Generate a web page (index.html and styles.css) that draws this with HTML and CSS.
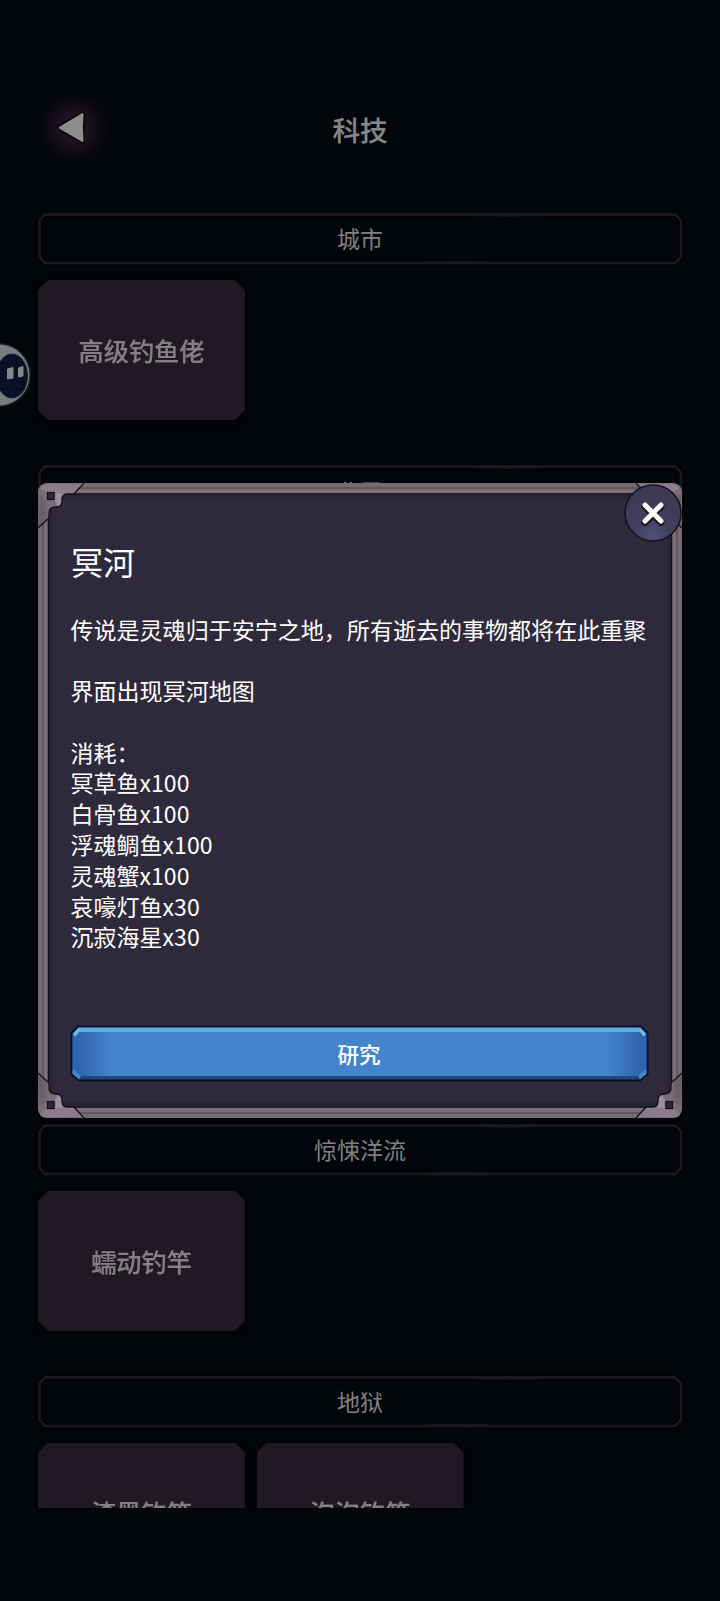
FILE: index.html
```html
<!DOCTYPE html>
<html lang="zh-CN">
<head>
<meta charset="utf-8">
<title>科技</title>
<link rel="stylesheet" href="styles.css">
</head>
<body>
<svg width="0" height="0" class="defs">
  <defs>
    <linearGradient id="cornerFill" x1="0" y1="1" x2="1" y2="0">
      <stop offset="0" stop-color="#6c5f69"/><stop offset="0.55" stop-color="#7f727d"/><stop offset="1" stop-color="#776a74"/>
    </linearGradient>
    <symbol id="headerBox" viewBox="0 0 644 52" overflow="visible">
      <path d="M7 1.500H637L643 7.500V44L637 50H7L1.500 44V7.500Z" fill="#02050a" stroke="#000003" stroke-width="5.500"/>
      <path d="M7 1.500H637L643 7.500V44L637 50H7L1.500 44V7.500Z" fill="none" stroke="#1b171c" stroke-width="2.800"/>
      <path d="M430 2.500Q470 4 510 2.500M390 49Q420 47.500 450 49" fill="none" stroke="#1b171c" stroke-width="1"/>
    </symbol>
    <g id="corner">
      <path d="M0 45V10Q0 0 10 0H46L36 11H28Q24 12 24 18Q24 24 18 24Q11 24 11 30V35Z" fill="url(#cornerFill)"/>
      <path d="M3 5L10 10H17L19 17L23 11L34 11L44 1H10Q5 1 3 5Z" fill="#94869a" opacity=".6"/>
      <path d="M17 17L20 24L23 21V13L26 11L18 10Z" fill="#a49aa8" opacity=".7"/>
      <path d="M1 10L8 17V36L1 43Z" fill="#62545e" opacity=".4"/>
      <path d="M46 0L36 11H29Q24 11 24 18Q24 24 18 24Q11 24 11 30V35L0 45" fill="none" stroke="#171018" stroke-width="1.300"/>
      <rect x="9.500" y="9.500" width="6.500" height="7" fill="#30283a" stroke="#150f18" stroke-width="1.300"/>
    </g>
  </defs>
</svg>
<main class="screen">
  <header class="topbar">
    <svg class="back" viewBox="0 0 100 80">
      <path d="M32 36Q30 37.700 32 39.500L54.500 52.500Q57.500 53.500 57.300 50Q56 37 57.300 25Q57.500 21.500 54.500 22.500Z" fill="#8d8d8d" stroke="#08050a" stroke-width="1.600"/>
    </svg>
    <h1 class="title">科技</h1>
  </header>
  <div class="list">
    <section class="section">
      <h2 class="head"><svg class="head-bg"><use href="#headerBox" width="644" height="52"/></svg><span>城市</span></h2>
      <div class="cards"><div class="card-wrap"><div class="card">高级钓鱼佬</div></div></div>
    </section>
    <section class="section tall">
      <h2 class="head"><svg class="head-bg"><use href="#headerBox" width="644" height="52"/></svg><span>北灵</span></h2>
    </section>
    <section class="section">
      <h2 class="head"><svg class="head-bg"><use href="#headerBox" width="644" height="52"/></svg><span>惊悚洋流</span></h2>
      <div class="cards"><div class="card-wrap"><div class="card">蠕动钓竿</div></div></div>
    </section>
    <section class="section">
      <h2 class="head"><svg class="head-bg"><use href="#headerBox" width="644" height="52"/></svg><span>地狱</span></h2>
      <div class="cards"><div class="card-wrap"><div class="card">漆黑钓竿</div></div><div class="card-wrap"><div class="card">泡泡钓竿</div></div></div>
    </section>
  </div>

  <svg class="assistant" viewBox="0 0 34 66">
    <circle cx="-1" cy="33" r="31.200" fill="#777d7f" stroke="#14232f" stroke-width="1.500"/>
    <ellipse cx="12" cy="34" rx="15.500" ry="22" fill="#091125" stroke="#1a2433"/>
    <path d="M7.500 27L13 25.500V36L7.500 37ZM18.500 26L23 24.500V34L18.500 35Z" fill="#85898e" stroke="#85898e" stroke-width="1" stroke-linejoin="round"/>
  </svg>

  <div class="modal" role="dialog">
    <svg class="frame" viewBox="0 0 644 635">
      <rect width="644" height="635" rx="11" fill="#766a73"/>
      <rect x="5" y="5" width="634" height="625" rx="4" fill="none" stroke="#65565f" stroke-width="2"/>
      <rect x="8" y="8" width="628" height="619" fill="none" stroke="#7e7079" stroke-width="2"/>
      <rect x="10.500" y="11" width="623" height="613" fill="#2f2a3b" stroke="#130f19" stroke-width="1.500"/>
      <rect x="13" y="13.500" width="618" height="608" fill="none" stroke="#292334" stroke-width="4"/>
      <use href="#corner"/>
      <use href="#corner" transform="translate(644 0) scale(-1 1)"/>
      <use href="#corner" transform="translate(0 635) scale(1 -1)"/>
      <use href="#corner" transform="translate(644 635) scale(-1 -1)"/>
    </svg>
    <div class="content">
      <h2 class="name">冥河</h2>
      <div class="desc">
        <p>传说是灵魂归于安宁之地，所有逝去的事物都将在此重聚</p>
        <p>界面出现冥河地图</p>
        <p>消耗：<br>冥草鱼x100<br>白骨鱼x100<br>浮魂鲷鱼x100<br>灵魂蟹x100<br>哀嚎灯鱼x30<br>沉寂海星x30</p>
      </div>
      <button class="research">
        <svg class="btn-bg" viewBox="0 0 580 58">
          <defs>
            <linearGradient id="btnFill"><stop offset="0" stop-color="#3262a8"/><stop offset=".015" stop-color="#3468ae"/><stop offset=".065" stop-color="#4384cd"/><stop offset=".935" stop-color="#4384cd"/><stop offset=".985" stop-color="#3468ae"/><stop offset="1" stop-color="#3262a8"/></linearGradient>
          </defs>
          <path d="M8 1.500H571L577.500 8V49L570 55.500H9L1.500 49V8Z" fill="#1e4784" stroke="#071026" stroke-width="2"/>
          <path d="M2.500 9L5 7V50L2.500 48ZM576.500 9L574 7V50L576.500 48Z" fill="#2f65ae"/>
          <path d="M9 6H570L574 10V47L569 51H10L5 47V10Z" fill="url(#btnFill)"/>
          <path d="M9 2.500H570L573 7H6Z" fill="#57b0e2"/>
          <path d="M3 8.500L9 2.500L10 6L5 12ZM576 8.500L570 2.500L569 6L574 12Z" fill="#6fbbe8"/>
          <path d="M3 44L11 51L9 54.500L2.500 49ZM576 44L568 51L570 54.500L576.500 49Z" fill="#4288ce"/>
        </svg>
        <span>研究</span>
      </button>
    </div>
    <svg class="close" viewBox="0 0 60 60">
      <defs><radialGradient id="closeFill" cx=".5" cy=".9" r=".75"><stop offset="0" stop-color="#50507a"/><stop offset=".4" stop-color="#42405e"/><stop offset="1" stop-color="#3d3a55"/></radialGradient></defs>
      <circle cx="30" cy="30" r="28" fill="url(#closeFill)" stroke="#16131f" stroke-width="1.600"/>
      <path d="M22 23.500L38 39.500M38 23.500L22 39.500" stroke="#1a1726" stroke-width="7" stroke-linecap="round"/>
      <path d="M22 22L38 38M38 22L22 38" stroke="#fff" stroke-width="5" stroke-linecap="round"/>
    </svg>
  </div>
</main>
</body>
</html>
```
FILE: styles.css
```css
* { box-sizing: border-box; margin: 0; padding: 0; }
body { background: #02060b; font-family: "Noto Sans CJK SC", sans-serif; }
.defs { position: absolute; }
.screen { position: relative; width: 720px; height: 1601px; overflow: hidden; background: #02060b; }
.topbar { display: grid; grid-template-columns: 100px 1fr 100px; height: 213px; padding: 90px 27px 0; }
.back { width: 100px; height: 80px; background: radial-gradient(circle at 47px 38px, #24152a 0, #1c1120 16px, #0c0912 26px, rgba(2, 6, 11, 0) 37px); }
.title { text-align: center; font-size: 27.6px; font-weight: 500; line-height: 40px; padding-top: 19px; color: #878788; -webkit-text-stroke: 0.2px #878788; }
.list { height: 1295px; padding: 0 38px; overflow: hidden; }
.section { display: flex; flex-direction: column; gap: 15px; height: 251.500px; }
.section.tall { height: 659.500px; }
.section.tall .head { padding-top: 1px; }
.head { position: relative; display: flex; justify-content: center; flex: none; height: 52px; font-size: 23px; font-weight: 400; line-height: 51px; color: #808080; }
.head span { position: relative; }
.head-bg { position: absolute; inset: 0; width: 644px; height: 52px; overflow: visible; }
.cards { display: flex; gap: 11.500px; }
.card-wrap { filter: drop-shadow(0 2px 3px #000); }
.card { display: flex; align-items: center; justify-content: center; width: 207px; height: 140px; padding-bottom: 1px; background: #201823; color: #828083; font-size: 25.200px; font-weight: 500; -webkit-text-stroke: 0.2px #828083; clip-path: polygon(10px 0, 197px 0, 100% 10px, 100% 130px, 197px 100%, 10px 100%, 0 130px, 0 10px); }
.assistant { position: absolute; left: 0; top: 342px; width: 34px; height: 66px; }
.modal { position: absolute; left: 38px; top: 483px; width: 644px; height: 635px; }
.frame { position: absolute; inset: 0; width: 644px; height: 635px; }
.content { position: relative; display: flex; flex-direction: column; height: 100%; padding: 55px 32px 35px; color: #fff; }
.name { font-size: 32px; font-weight: 400; line-height: 46px; margin: 0 0 29.500px 1px; }
.desc { flex: 1; display: flex; flex-direction: column; gap: 30.780px; padding-left: .5px; font-size: 23.040px; line-height: 30.780px; white-space: nowrap; }
.research { position: relative; width: 580px; height: 58px; border: 0; background: none; color: #fff; font: 500 21.500px/54px "Noto Sans CJK SC", sans-serif; -webkit-text-stroke: 0.1px #fff; }
.research span { position: relative; left: -1px; }
.btn-bg { position: absolute; inset: 0; width: 580px; height: 58px; }
.close { position: absolute; left: 585px; top: -.5px; width: 60px; height: 60px; }
```
